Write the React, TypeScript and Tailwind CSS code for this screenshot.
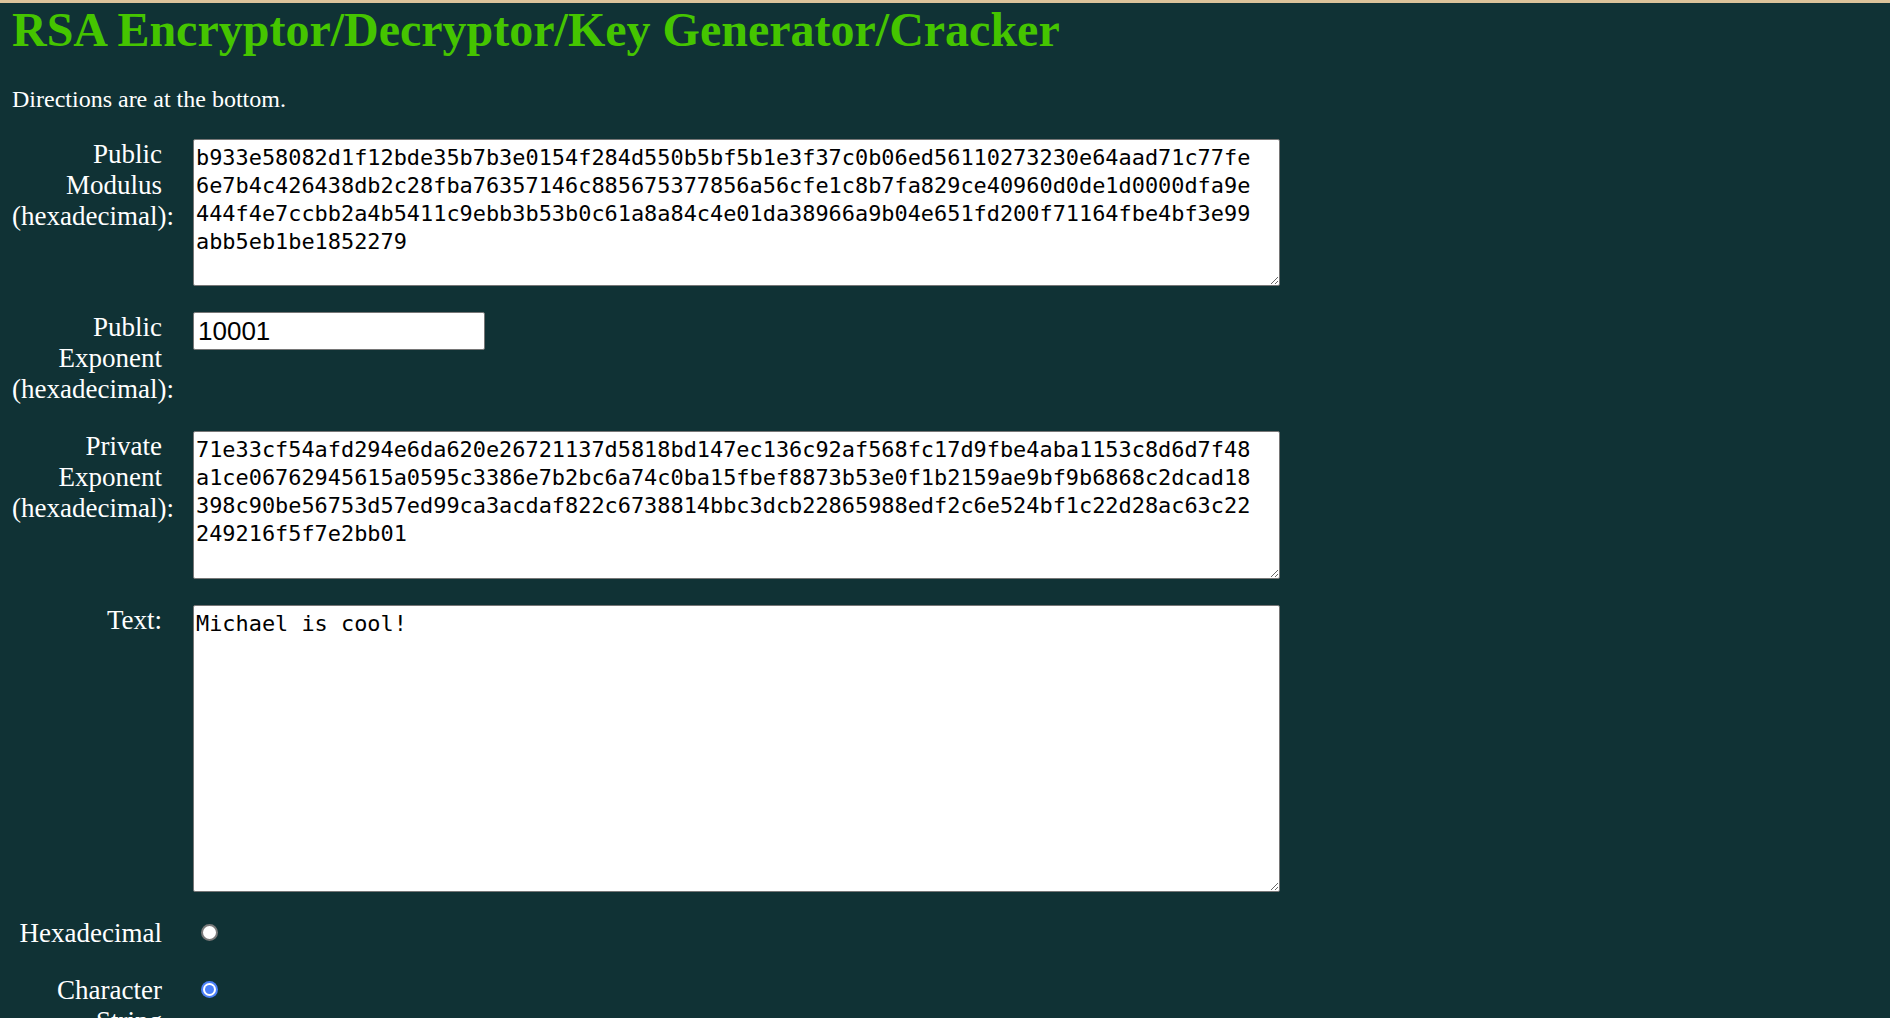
import React from 'react';

const modulus =
  'b933e58082d1f12bde35b7b3e0154f284d550b5bf5b1e3f37c0b06ed56110273230e64aad71c77fe\n' +
  '6e7b4c426438db2c28fba76357146c885675377856a56cfe1c8b7fa829ce40960d0de1d0000dfa9e\n' +
  '444f4e7ccbb2a4b5411c9ebb3b53b0c61a8a84c4e01da38966a9b04e651fd200f71164fbe4bf3e99\n' +
  'abb5eb1be1852279';

const privateExp =
  '71e33cf54afd294e6da620e26721137d5818bd147ec136c92af568fc17d9fbe4aba1153c8d6d7f48\n' +
  'a1ce06762945615a0595c3386e7b2bc6a74c0ba15fbef8873b53e0f1b2159ae9bf9b6868c2dcad18\n' +
  '398c90be56753d57ed99ca3acdaf822c6738814bbc3dcb22865988edf2c6e524bf1c22d28ac63c22\n' +
  '249216f5f7e2bb01';

function Label({ children }: { children: React.ReactNode }) {
  return <div className="w-[150px] shrink-0 text-right">{children}</div>;
}

function Area({ value, h }: { value: string; h: string }) {
  return (
    <textarea
      defaultValue={value}
      spellCheck={false}
      className={`w-[1087px] ${h} resize bg-white text-black border border-[#767676] rounded-[2px] px-[2px] pt-[4px] pb-[2px] font-['DejaVu_Sans_Mono',monospace] text-[21.9px] leading-[28px] outline-none`}
    />
  );
}

function Radio({ checked }: { checked?: boolean }) {
  if (checked) {
    return (
      <span className="mt-[6px] ml-[8px] flex h-[17px] w-[17px] items-center justify-center rounded-full bg-[#4a7ff7]">
        <span className="flex h-[13px] w-[13px] items-center justify-center rounded-full bg-white">
          <span className="h-[9px] w-[9px] rounded-full bg-[#4a7ff7]" />
        </span>
      </span>
    );
  }
  return <span className="mt-[6px] ml-[8px] h-[17px] w-[17px] rounded-full border-2 border-[#7a7a7a] bg-white" />;
}

export default function App() {
  return (
    <div className="min-h-screen bg-[#103235] border-t-[3px] border-[#dcc39a] px-[12px] text-white font-['Liberation_Serif',serif] text-[27px] leading-[31px]">
      <h1 className="text-[48px] leading-[54px] font-bold text-[#45c500]">
        RSA Encryptor/Decryptor/Key Generator/Cracker
      </h1>
      <p className="mt-[28px] text-[24px] leading-[28px]">Directions are at the bottom.</p>

      <div className="mt-[26px] flex flex-col gap-[26px]">
        <div className="flex gap-[31px]">
          <Label>Public Modulus (hexadecimal):</Label>
          <Area value={modulus} h="h-[147px]" />
        </div>

        <div className="flex gap-[31px]">
          <Label>Public Exponent (hexadecimal):</Label>
          <input
            defaultValue="10001"
            className="h-[38px] w-[292px] bg-white text-black border border-[#767676] rounded-[2px] px-[4px] font-['Liberation_Sans',sans-serif] text-[26px] outline-none"
          />
        </div>

        <div className="flex gap-[31px]">
          <Label>Private Exponent (hexadecimal):</Label>
          <Area value={privateExp} h="h-[148px]" />
        </div>

        <div className="flex gap-[31px]">
          <Label>Text:</Label>
          <Area value="Michael is cool!" h="h-[287px]" />
        </div>

        <div className="flex gap-[31px]">
          <Label>Hexadecimal</Label>
          <Radio />
        </div>

        <div className="flex gap-[31px]">
          <Label>Character String</Label>
          <Radio checked />
        </div>
      </div>
    </div>
  );
}
